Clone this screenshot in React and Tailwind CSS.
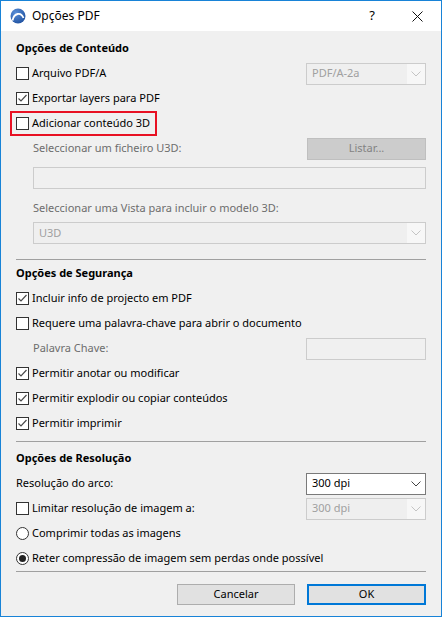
import React from 'react';

const font = { fontFamily: '"Noto Sans", "Liberation Sans", sans-serif' };

function Check({ checked }) {
  return (
    <span className="w-[13px] h-[13px] border border-[#333333] bg-white flex items-center justify-center shrink-0">
      {checked && (
        <svg width="11" height="11" viewBox="0 0 11 11">
          <polyline points="1.5,5.5 4,8 9.5,2" fill="none" stroke="#4a4a4a" strokeWidth="1.2" />
        </svg>
      )}
    </span>
  );
}

function Radio({ checked }) {
  return (
    <span className="w-[13px] h-[13px] rounded-full border border-[#333333] bg-white flex items-center justify-center shrink-0">
      {checked && <span className="w-[7px] h-[7px] rounded-full bg-[#222222]" />}
    </span>
  );
}

function Chevron({ color }) {
  return (
    <svg width="10" height="6" viewBox="0 0 10 6">
      <polyline points="0.5,0.5 5,5 9.5,0.5" fill="none" stroke={color} strokeWidth="1" />
    </svg>
  );
}

function Select({ value, disabled, className = 'w-[120px]' }) {
  if (disabled) {
    return (
      <div className={`${className} h-[22px] border border-[#cccccc] flex`}>
        <div className="flex-1 bg-[#efefef] pl-[5px] flex items-center text-[#a0a0a0]">{value}</div>
        <div className="w-[18px] bg-[#f7f7f7] flex items-center justify-center">
          <Chevron color="#c4c4c4" />
        </div>
      </div>
    );
  }
  return (
    <div className={`${className} h-[22px] border border-[#7a7a7a] bg-white flex items-center`}>
      <div className="flex-1 pl-[5px] text-black">{value}</div>
      <div className="w-[18px] flex items-center justify-center">
        <Chevron color="#444444" />
      </div>
    </div>
  );
}

function CheckRow({ checked, label, right }) {
  return (
    <div className="h-[25px] flex items-center">
      <Check checked={checked} />
      <span className="ml-[3px] flex-1">{label}</span>
      {right}
    </div>
  );
}

function Header({ children }) {
  return <div className="h-[25px] flex items-center font-bold">{children}</div>;
}

function Logo() {
  return (
    <svg width="16" height="16" viewBox="0 0 16 16">
      <defs>
        <radialGradient id="lg" cx="0.35" cy="0.3" r="0.8">
          <stop offset="0" stopColor="#5a8fd8" />
          <stop offset="1" stopColor="#1d4f9e" />
        </radialGradient>
      </defs>
      <circle cx="8" cy="8" r="7.5" fill="url(#lg)" />
      <path d="M2.5 12.5 C4 5, 11 3.5, 13.5 10" fill="none" stroke="#ffffff" strokeWidth="1.8" />
    </svg>
  );
}

export default function App() {
  return (
    <div style={font} className="w-[442px] h-[617px] border border-[#1883d7] bg-[#f0f0f0] text-[11px] text-black flex flex-col overflow-hidden">
      {/* Title bar */}
      <div className="h-[30px] bg-white flex items-center shrink-0">
        <div className="ml-[9px] w-[16px] h-[16px]">
          <Logo />
        </div>
        <span className="ml-[6px] text-[12px]">Opções PDF</span>
        <span className="ml-auto mr-[37px] text-[13px]">?</span>
        <svg className="mr-[18px]" width="11" height="11" viewBox="0 0 11 11">
          <path d="M0.5 0.5 L10.5 10.5 M10.5 0.5 L0.5 10.5" stroke="#111111" strokeWidth="1" />
        </svg>
      </div>

      <div className="px-[15px] pt-[5px] flex flex-col">
        <Header>Opções de Conteúdo</Header>
        <CheckRow label="Arquivo PDF/A" right={<Select value="PDF/A-2a" disabled />} />
        <CheckRow checked label="Exportar layers para PDF" />
        <div className="h-[25px] flex">
          <div className="-ml-[6px] pl-[4px] pr-[5px] border-2 border-[#e81123] flex items-center">
            <Check />
            <span className="ml-[3px]">Adicionar conteúdo 3D</span>
          </div>
        </div>

        <div className="pl-[17px] flex flex-col text-[#6d6d6d]">
          <div className="h-[25px] flex items-center">
            <span className="flex-1">Seleccionar um ficheiro U3D:</span>
            <div className="w-[119px] h-[22px] bg-[#cccccc] border border-[#bfbfbf] flex items-center justify-center text-[#838383]">
              Listar...
            </div>
          </div>
          <div className="mt-[6px] h-[22px] border border-[#cccccc] bg-[#f0f0f0]" />
          <div className="mt-[7px] h-[25px] flex items-center">Seleccionar uma Vista para incluir o modelo 3D:</div>
          <Select value="U3D" disabled className="mt-[1px] w-full" />
        </div>

        <div className="mt-[15px] h-px bg-[#a0a0a0]" />

        <div className="mt-[1px]">
          <Header>Opções de Segurança</Header>
        </div>
        <CheckRow checked label="Incluir info de projecto em PDF" />
        <CheckRow label="Requere uma palavra-chave para abrir o documento" />
        <div className="h-[25px] flex items-center pl-[17px] text-[#6d6d6d]">
          <span className="flex-1">Palavra Chave:</span>
          <div className="w-[120px] h-[22px] border border-[#cccccc] bg-[#f0f0f0]" />
        </div>
        <CheckRow checked label="Permitir anotar ou modificar" />
        <CheckRow checked label="Permitir explodir ou copiar conteúdos" />
        <CheckRow checked label="Permitir imprimir" />

        <div className="mt-[5px] h-px bg-[#a0a0a0]" />

        <div className="mt-[4px]">
          <Header>Opções de Resolução</Header>
        </div>
        <div className="h-[25px] flex items-center">
          <span className="flex-1">Resolução do arco:</span>
          <Select value="300 dpi" />
        </div>
        <CheckRow label="Limitar resolução de imagem a:" right={<Select value="300 dpi" disabled />} />
        <div className="h-[25px] flex items-center">
          <Radio />
          <span className="ml-[3px]">Comprimir todas as imagens</span>
        </div>
        <div className="h-[25px] flex items-center">
          <Radio checked />
          <span className="ml-[3px]">Reter compressão de imagem sem perdas onde possível</span>
        </div>

        <div className="h-px bg-[#a0a0a0]" />

        <div className="mt-[12px] flex justify-end gap-[12px]">
          <div className="w-[118px] h-[21px] bg-[#e1e1e1] border border-[#adadad] flex items-center justify-center">
            Cancelar
          </div>
          <div className="w-[119px] h-[21px] bg-[#e1e1e1] border-2 border-[#0078d7] flex items-center justify-center">
            OK
          </div>
        </div>
      </div>
    </div>
  );
}
